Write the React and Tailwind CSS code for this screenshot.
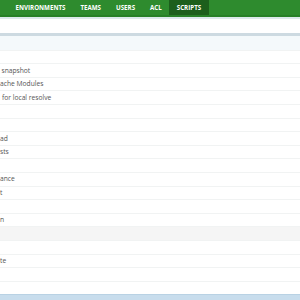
export default function App() {
  const rows = [
    { t: "" },
    { t: "a snapshot", ml: "-ml-[4px]" },
    { t: "ache Modules" },
    { t: "for local resolve", ml: "ml-[2px]" },
    { t: "" },
    { t: "" },
    { t: "ad" },
    { t: "sts" },
    { t: "" },
    { t: "ance" },
    { t: "t" },
    { t: "" },
    { t: "n" },
    { t: "", gray: true },
    { t: "" },
    { t: "te" },
    { t: "" },
    { t: "" },
  ];
  const nav = ["ENVIRONMENTS", "TEAMS", "USERS", "ACL", "SCRIPTS"];
  return (
    <div className="w-[300px] h-[300px] overflow-hidden bg-white" style={{ fontFamily: '"Open Sans", "Liberation Sans", sans-serif' }}>
      <div className="h-[17px] bg-[#2e8b2e] flex items-start pl-[8px] border-b-[2px] border-[#278027]">
        {nav.map((n) => (
          <div
            key={n}
            className={
              "h-[15px] px-[7.5px] flex items-center text-[6.2px] font-bold text-white " +
              (n === "SCRIPTS" ? "bg-[#1c5f1c]" : "")
            }
          >
            {n}
          </div>
        ))}
      </div>
      <div className="h-[2px] bg-[#dce9ec]" />
      <div className="h-[14px] bg-white" />
      <div className="h-[3px] bg-[#cddae1]" />
      <div className="h-[13.7px] bg-[#f4f9fb]" />
      {rows.map((r, i) => (
        <div
          key={i}
          className={
            "h-[13.6px] border-t border-[#f1f3f3] flex items-center overflow-hidden text-[6.7px] text-[#555] whitespace-nowrap " +
            (r.gray ? "bg-[#f5f5f5]" : "bg-white")
          }
        >
          <span className={r.ml || ""}>{r.t}</span>
        </div>
      ))}
      <div className="h-[6px] bg-[#c8dded] border-t border-[#b9d2e4]" />
    </div>
  );
}
